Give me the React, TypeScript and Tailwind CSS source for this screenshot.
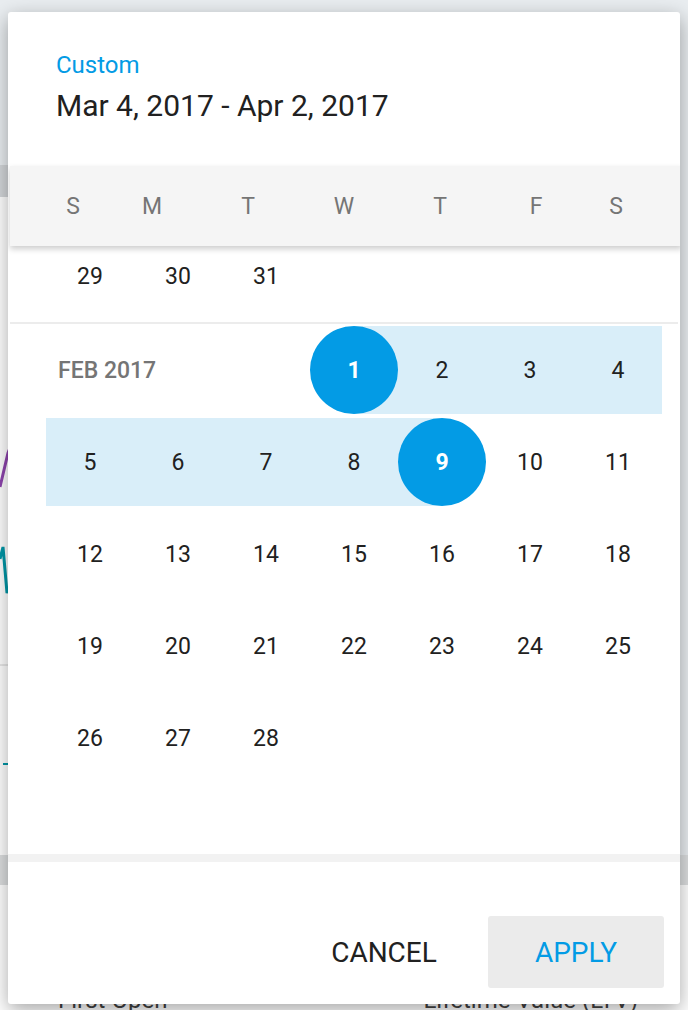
import React from 'react';

const WEEKDAYS = ['S', 'M', 'T', 'W', 'T', 'F', 'S'];

type Cell = { day?: number; kind?: 'start' | 'end' | 'range' };

const FEB_ROWS: Cell[][] = [
  [{}, {}, {}, { day: 1, kind: 'start' }, { day: 2, kind: 'range' }, { day: 3, kind: 'range' }, { day: 4, kind: 'range' }],
  [
    { day: 5, kind: 'range' },
    { day: 6, kind: 'range' },
    { day: 7, kind: 'range' },
    { day: 8, kind: 'range' },
    { day: 9, kind: 'end' },
    { day: 10 },
    { day: 11 },
  ],
  [12, 13, 14, 15, 16, 17, 18].map((d) => ({ day: d })),
  [19, 20, 21, 22, 23, 24, 25].map((d) => ({ day: d })),
  [{ day: 26 }, { day: 27 }, { day: 28 }, {}, {}, {}, {}],
];

function DayCell({ cell }: { cell: Cell }) {
  let bg = '';
  if (cell.kind === 'range') bg = 'bg-[#d9eef9]';
  if (cell.kind === 'start') bg = 'bg-[linear-gradient(to_right,transparent_50%,#d9eef9_50%)]';
  if (cell.kind === 'end') bg = 'bg-[linear-gradient(to_right,#d9eef9_50%,transparent_50%)]';

  if (cell.kind === 'start' || cell.kind === 'end') {
    return (
      <div className={`flex h-[88px] items-center justify-center ${bg}`}>
        <div className="flex h-[88px] w-[88px] items-center justify-center rounded-full bg-[#039be5] pt-[2px] text-[23px] font-bold text-white">
          {cell.day}
        </div>
      </div>
    );
  }
  return (
    <div className={`flex h-[88px] items-center justify-center pt-[2px] text-[23px] text-[#212121] ${bg}`}>
      {cell.day ?? ''}
    </div>
  );
}

function Background() {
  return (
    <div className="h-[1010px] bg-[#e9edf0] pt-[165px]">
      <div className="h-[32px] w-[320px] bg-[#d3d6d9]" />
      <div className="h-[658px] w-[660px] bg-white">
        <svg width="120" height="658" viewBox="0 0 120 658" className="block">
          <polyline points="0,290 8,256 30,200" fill="none" stroke="#8e44ad" strokeWidth="3" />
          <polyline points="0,362 3,350 7,396 30,340" fill="none" stroke="#0097a7" strokeWidth="3" />
          <line x1="0" y1="468" x2="120" y2="468" stroke="#d0d0d0" strokeWidth="1" />
          <line x1="3" y1="567" x2="20" y2="567" stroke="#0097a7" strokeWidth="2" />
        </svg>
      </div>
      <div className="h-[30px] bg-[#dcdedf]" />
      <div className="flex h-[125px] items-end bg-white text-[24px] leading-[20px] text-[#424242]">
        <span className="ml-[58px]">First Open</span>
        <span className="ml-[256px]">Lifetime Value (LTV)</span>
      </div>
    </div>
  );
}

export default function App() {
  return (
    <div className="relative h-[1010px] w-[688px] overflow-hidden font-['Roboto',sans-serif]">
      <Background />

      <div className="absolute left-[8px] top-[12px] flex h-[992px] w-[672px] flex-col overflow-hidden rounded-[3px] bg-white shadow-[0_6px_20px_rgba(0,0,0,0.35)]">
        <div className="h-[154px] shrink-0 pl-[48px] pt-[38px]">
          <div className="text-[24px] leading-[30px] text-[#039be5]">Custom</div>
          <div className="mt-[8px] text-[30px] leading-[36px] text-[#212121]">Mar 4, 2017 - Apr 2, 2017</div>
        </div>

        <div className="relative z-10 grid h-[80px] shrink-0 translate-x-[2px] grid-cols-[62px_96px_96px_96px_96px_96px_64px] items-center bg-[#f5f5f5] pl-[32px] pt-[2px] text-[23px] text-[#757575] shadow-[0_3px_6px_rgba(0,0,0,0.2)]">
          {WEEKDAYS.map((d, i) => (
            <div key={i} className="text-center">
              {d}
            </div>
          ))}
        </div>

        <div className="flex-1 overflow-hidden">
          <div className="grid h-[76px] grid-cols-[repeat(7,88px)] pl-[38px] pt-[2px] text-[23px] leading-[58px] text-[#212121]">
            <div className="text-center">29</div>
            <div className="text-center">30</div>
            <div className="text-center">31</div>
          </div>
          <div className="mx-[2px] h-[2px] bg-[#ececec]" />
          <div className="flex flex-col gap-[4px] pl-[38px] pt-[2px]">
            {FEB_ROWS.map((row, r) => (
              <div key={r} className="grid w-[616px] grid-cols-[repeat(7,88px)]">
                {r === 0 && (
                  <div className="col-span-3 flex h-[88px] items-center pl-[12px] pt-[2px] text-[23px] font-medium text-[#757575]">
                    FEB 2017
                  </div>
                )}
                {row.map((cell, c) => (r === 0 && c < 3 ? null : <DayCell key={c} cell={cell} />))}
              </div>
            ))}
          </div>
        </div>

        <div className="h-[8px] shrink-0 bg-[#f2f2f2]" />

        <div className="flex h-[142px] shrink-0 items-end justify-end gap-[16px] pb-[16px] pr-[16px]">
          <button className="flex h-[72px] w-[176px] items-center justify-center pt-[2px] text-[28px] text-[#212121]">
            CANCEL
          </button>
          <button className="flex h-[72px] w-[176px] items-center justify-center rounded-[3px] bg-[#ebebeb] pt-[2px] text-[28px] text-[#039be5]">
            APPLY
          </button>
        </div>
      </div>
    </div>
  );
}
